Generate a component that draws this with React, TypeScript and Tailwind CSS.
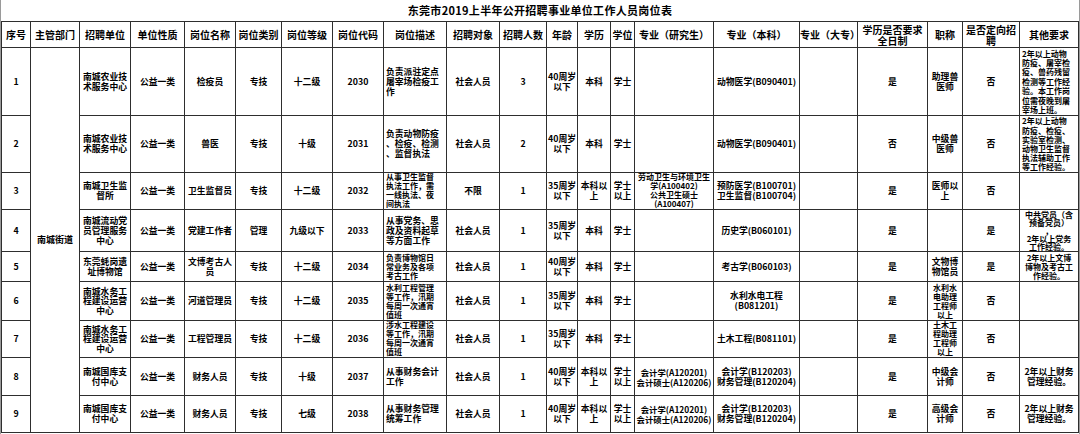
import React from 'react';

type Cell = string | { t: string; c?: string };

type Row = { h: string; cells: Cell[] };

const headers: Cell[] = [
  '序号', '主管部门', '招聘单位', '单位性质', '岗位名称', '岗位类别', '岗位等级', '岗位代码', '岗位描述',
  '招聘对象', '招聘人数', '年龄', '学历', '学位', '专业（研究生）', '专业（本科）', '专业（大专）',
  { t: '学历是否要求|全日制', c: 'leading-[11px]' }, '职称', { t: '是否定向招|聘', c: 'leading-[11px]' }, '其他要求',
];

const L = 'text-left pl-[2px]';

const rows: Row[] = [
  {
    h: 'h-[68px]',
    cells: ['1', '南城农业技|术服务中心', '公益一类', '检疫员', '专技', '十二级', '2030',
      { t: '负责派驻定点|屠宰场检疫工|作', c: L + ' leading-[10px]' }, '社会人员', '3', '40周岁|以下', '本科', '学士', '',
      '动物医学(B090401)', '', '是', '助理兽|医师', '否',
      { t: '2年以上动物|防疫、屠宰检|疫、兽药残留|检测等工作经|验。本工作岗|位需夜晚到屠|宰场上班。', c: L + ' leading-[9.4px]' }],
  },
  {
    h: 'h-[57px]',
    cells: ['2', '南城农业技|术服务中心', '公益一类', '兽医', '专技', '十级', '2031',
      { t: '负责动物防疫|、检疫、检测|、监督执法', c: L + ' leading-[10px]' }, '社会人员', '2', '40周岁|以下', '本科', '学士', '',
      '动物医学(B090401)', '', '否', '中级兽|医师', '否',
      { t: '2年以上动物|防疫、检疫、|实验室检测、|动物卫生监督|执法辅助工作|等工作经验。', c: L + ' leading-[9.2px]' }],
  },
  {
    h: 'h-[37px]',
    cells: ['3', '南城卫生监|督所', '公益一类', '卫生监督员', '专技', '十二级', '2032',
      { t: '从事卫生监督|执法工作，需|一线执法、夜|间执法', c: L + ' leading-[8.8px]' }, '不限', '1', '35周岁|以下', '本科以|上', '学士|以上',
      { t: '劳动卫生与环境卫生|学(A100402)|公共卫生硕士|(A100407)', c: 'leading-[8.8px]' },
      '预防医学(B100701)|卫生监督(B100704)', '', '是', '医师以|上', '否', ''],
  },
  {
    h: 'h-[42px]',
    cells: ['4', '南城流动党|员管理服务|中心', '公益一类', '党建工作者', '管理', '九级以下', '2033',
      { t: '从事党务、思|政及资料起草|等方面工作', c: L + ' leading-[10px]' }, '社会人员', '1', '35周岁|以下', '本科', '学士', '',
      '历史学(B060101)', '', '是', '', '是',
      { t: '中共党员（含|预备党员）|，|2年以上党务|工作经验。', c: 'leading-[8px]' }],
  },
  {
    h: 'h-[30px]',
    cells: ['5', '东莞蚝岗遗|址博物馆', '公益一类', '文博考古人|员', '专技', '十二级', '2034',
      { t: '负责博物馆日|常业务及各项|考古工作', c: L + ' leading-[9.3px]' }, '社会人员', '1', '40周岁|以下', '本科', '学士', '',
      '考古学(B060103)', '', '是', '文物博|物馆员', '是',
      { t: '2年以上文博|博物及考古工|作经验。', c: 'leading-[9px]' }],
  },
  {
    h: 'h-[39px]',
    cells: ['6', { t: '南城水务工|程建设运营|中心', c: 'leading-[9.5px]' }, '公益一类', '河道管理员', '专技', '十二级', '2035',
      { t: '水利工程管理|等工作，汛期|每周一次通宵|值班', c: L + ' leading-[9px]' }, '社会人员', '1', '35周岁|以下', '本科', '学士', '',
      '水利水电工程|(B081201)', '', '是', { t: '水利水|电助理|工程师|以上', c: 'leading-[9px]' }, '否', ''],
  },
  {
    h: 'h-[37px]',
    cells: ['7', { t: '南城水务工|程建设运营|中心', c: 'leading-[9.5px]' }, '公益一类', '工程管理员', '专技', '十二级', '2036',
      { t: '涉水工程建设|等工作，汛期|每周一次通宵|值班', c: L + ' leading-[8.8px]' }, '社会人员', '1', '35周岁|以下', '本科', '学士', '',
      '土木工程(B081101)', '', '是', { t: '土木工|程助理|工程师|以上', c: 'leading-[8.8px]' }, '否', ''],
  },
  {
    h: 'h-[38px]',
    cells: ['8', '南城国库支|付中心', '公益一类', '财务人员', '专技', '十级', '2037',
      { t: '从事财务会计|工作', c: L + ' leading-[10px]' }, '社会人员', '1', '40周岁|以下', '本科以|上', '学士|以上',
      { t: '会计学(A120201)|会计硕士(A120206)', c: 'text-[8.4px]' }, '会计学(B120203)|财务管理(B120204)', '', '是', '中级会|计师', '否',
      '2年以上财务|管理经验。'],
  },
  {
    h: 'h-[37px]',
    cells: ['9', '南城国库支|付中心', '公益一类', '财务人员', '专技', '七级', '2038',
      { t: '从事财务管理|统筹工作', c: L + ' leading-[10px]' }, '社会人员', '1', '40周岁|以下', '本科以|上', '学士|以上',
      { t: '会计学(A120201)|会计硕士(A120206)', c: 'text-[8.4px]' }, '会计学(B120203)|财务管理(B120204)', '', '是', '高级会|计师', '否',
      '2年以上财务|管理经验。'],
  },
];

function Lines({ t }: { t: string }) {
  const parts = t.split('|');
  return (
    <>
      {parts.map((p, i) => (
        <React.Fragment key={i}>
          {p}
          {i < parts.length - 1 && <br />}
        </React.Fragment>
      ))}
    </>
  );
}

function Td({ cell }: { cell: Cell }) {
  const t = typeof cell === 'string' ? cell : cell.t;
  const c = typeof cell === 'string' ? '' : cell.c ?? '';
  const m = c.match(/leading-\[([\d.]+)px\]/);
  const lead = m ? '' : 'leading-[10px]';
  // tight cells: use a smaller face so the lines don't run into each other
  const tight = m && parseFloat(m[1]) < 9.5 && !c.includes('text-[') ? 'text-[8px]' : '';
  return (
    <td className={`border border-[#2e2e2e] p-0 text-center align-middle whitespace-nowrap overflow-visible ${lead} ${tight} ${c}`}>
      <Lines t={t} />
    </td>
  );
}

export default function App() {
  return (
    <div className="w-[1080px] h-[434px] overflow-hidden bg-white border-l border-r border-[#9a9a9a] text-black font-['Noto_Sans_CJK_SC',sans-serif] font-bold">
      <div className="h-[21px] flex items-center justify-center text-[11px] font-bold tracking-[0.3px]">
        东莞市2019上半年公开招聘事业单位工作人员岗位表
      </div>
      <table className="table-fixed border-collapse w-[1077px] text-[8.8px]">
        <colgroup>
          <col className="w-[29px]" />
          <col className="w-[49px]" />
          <col className="w-[51px]" />
          <col className="w-[54px]" />
          <col className="w-[51px]" />
          <col className="w-[46px]" />
          <col className="w-[51px]" />
          <col className="w-[51px]" />
          <col className="w-[63px]" />
          <col className="w-[53px]" />
          <col className="w-[47px]" />
          <col className="w-[31px]" />
          <col className="w-[33px]" />
          <col className="w-[24px]" />
          <col className="w-[79px]" />
          <col className="w-[86px]" />
          <col className="w-[58px]" />
          <col className="w-[70px]" />
          <col className="w-[35px]" />
          <col className="w-[57px]" />
          <col className="w-[59px]" />
        </colgroup>
        <thead>
          <tr className="h-[26px]">
            {headers.map((h, i) => {
              const t = typeof h === 'string' ? h : h.t;
              const c = typeof h === 'string' ? 'leading-[12px]' : h.c ?? '';
              return (
                <th key={i} className={`border border-[#2e2e2e] p-0 font-bold text-[10px] text-center align-middle whitespace-nowrap ${c}`}>
                  <Lines t={t} />
                </th>
              );
            })}
          </tr>
        </thead>
        <tbody>
          {rows.map((r, ri) => (
            <tr key={ri} className={r.h}>
              {r.cells.map((cell, ci) => (
                <React.Fragment key={ci}>
                  <Td cell={cell} />
                  {ci === 0 && ri === 0 && (
                    <td rowSpan={9} className="border border-[#2e2e2e] p-0 text-center align-middle text-[9px] leading-[10px]">
                      南城街道
                    </td>
                  )}
                </React.Fragment>
              ))}
            </tr>
          ))}
        </tbody>
      </table>
    </div>
  );
}
